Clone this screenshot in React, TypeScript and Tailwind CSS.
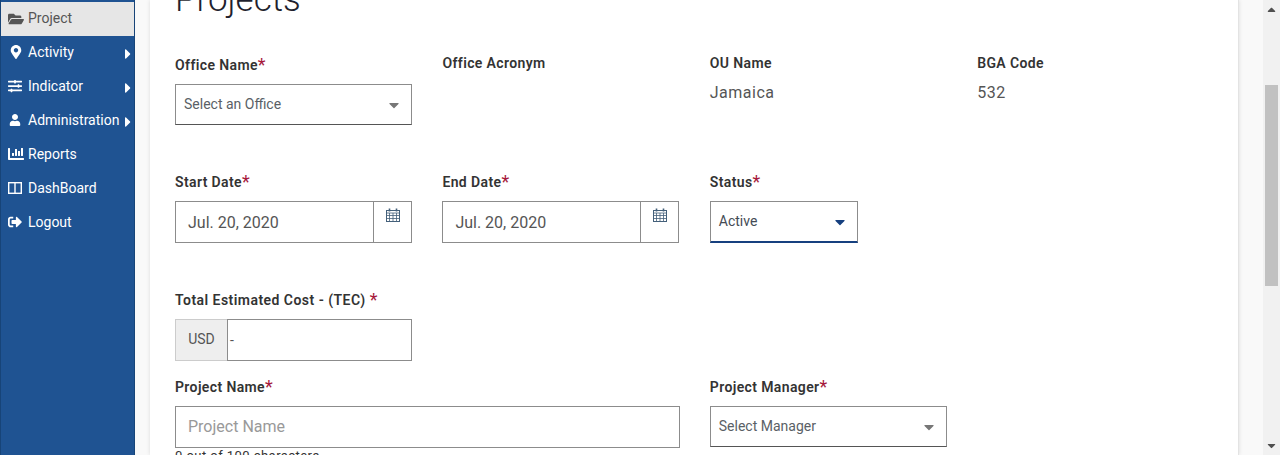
import { ReactNode } from "react";
import {
  FaCaretDown,
  FaCaretRight,
  FaCaretUp,
  FaChartBar,
  FaFolderOpen,
  FaMapMarkerAlt,
  FaSignOutAlt,
  FaSlidersH,
  FaUser,
} from "react-icons/fa";

const SplitIcon = () => (
  <svg width="14" height="12" viewBox="0 0 14 12" fill="none" stroke="currentColor" strokeWidth="1.4">
    <rect x="0.7" y="0.7" width="12.6" height="10.6" />
    <path d="M7 1v10" />
  </svg>
);

const CalendarIcon = () => (
  <svg width="14" height="14" viewBox="0 0 14 14" fill="none" stroke="currentColor" strokeWidth="1">
    <rect x="0.5" y="2.5" width="13" height="11" />
    <path d="M0.5 5h13M0.5 7.5h13M0.5 10.5h13M3.5 5v8M7 5v8M10.5 5v8" strokeWidth="0.8" />
    <path d="M3.5 0.5v3M10.5 0.5v3" strokeWidth="1.6" />
  </svg>
);

const MENU = [
  { name: "Activity", icon: <FaMapMarkerAlt size={14} className="ml-[1px]" />, more: true },
  { name: "Indicator", icon: <FaSlidersH size={14} />, more: true },
  { name: "Administration", icon: <FaUser size={12} className="ml-[1px]" />, more: true },
  { name: "Reports", icon: <FaChartBar size={16} />, more: false },
  { name: "DashBoard", icon: <SplitIcon />, more: false },
  { name: "Logout", icon: <FaSignOutAlt size={14} />, more: false },
];

const Label = ({ children, star = true, spaced = false }: { children: ReactNode; star?: boolean; spaced?: boolean }) => (
  <div className={`flex h-5 items-center text-[14px] font-semibold text-[#333333] ${spaced ? "tracking-[0.46px]" : "tracking-[0.38px]"}`}>
    <span>{children}</span>
    {star && <span className={`mt-[-2px] text-[18px] font-normal text-[#a6193c] ${spaced ? "ml-1" : ""}`}>*</span>}
  </div>
);

const SelectBox = ({ text, width }: { text: string; width: string }) => (
  <div className={`mt-[9px] flex h-[41px] items-center justify-between border border-[#8c8c8c] border-b-[#555555] pl-2 pr-[9px] text-[14px] text-[#5a5f66] ${width}`}>
    <span>{text}</span>
    <FaCaretDown size={16} className="text-[#777777]" />
  </div>
);

const DateBox = ({ value }: { value: string }) => (
  <div className="mt-[9px] flex h-[42px] w-[237px] border border-[#8c8c8c]">
    <div className="flex flex-1 items-center pl-3 pt-[2px] text-[16px] text-[#555555]">{value}</div>
    <div className="flex w-[38px] justify-center border-l border-[#8c8c8c] pt-[6px] text-[#44607a]">
      <CalendarIcon />
    </div>
  </div>
);

export default function App() {
  return (
    <div className="flex h-[455px] w-[1280px] overflow-hidden bg-[#f9f9f9] font-['Roboto',sans-serif]">
      <aside className="h-full w-[135px] shrink-0 border-l border-r border-[#174478] bg-[#1f5392] pt-[2px] text-[14px] text-white">
        <div className="flex h-[34px] items-center bg-[#e6e6e6] pb-[1px] pl-[7px] text-[#555555]">
          <span className="w-[20px]"><FaFolderOpen size={16} /></span>
          <span>Project</span>
        </div>
        {MENU.map((item) => (
          <div key={item.name} className="relative flex h-[34px] items-center pb-[2px] pl-[7px]">
            <span className="flex w-[20px]">{item.icon}</span>
            <span>{item.name}</span>
            {item.more && <FaCaretRight size={16} className="absolute right-[-2px] top-[10px]" />}
          </div>
        ))}
      </aside>

      <main className="ml-[15px] h-full w-[1089px] shrink-0 border-r border-[#e3e3e3] bg-white pl-[25px] shadow-[0_0_4px_rgba(0,0,0,0.12)]">
        <h1 className="mt-[-20px] h-[75px] text-[35px] font-light leading-[40px] text-[#1f1f2e]">Projects</h1>

        <div className="grid h-[117px] grid-cols-[267.4px_267.4px_267.4px_auto]">
          <div>
            <Label>Office Name</Label>
            <SelectBox text="Select an Office" width="w-[237px]" />
          </div>
          <div className="mt-[-2px]"><Label star={false}>Office Acronym</Label></div>
          <div className="mt-[-2px]">
            <Label star={false}>OU Name</Label>
            <div className="mt-[8px] text-[16px] tracking-[0.5px] text-[#555555]">Jamaica</div>
          </div>
          <div className="mt-[-2px]">
            <Label star={false}>BGA Code</Label>
            <div className="mt-[8px] text-[16px] tracking-[0.5px] text-[#555555]">532</div>
          </div>
        </div>

        <div className="grid h-[118px] grid-cols-[267.4px_267.4px_auto]">
          <div>
            <Label>Start Date</Label>
            <DateBox value="Jul. 20, 2020" />
          </div>
          <div>
            <Label>End Date</Label>
            <DateBox value="Jul. 20, 2020" />
          </div>
          <div>
            <Label>Status</Label>
            <div className="mt-[9px] flex h-[42px] w-[148px] items-center justify-between border border-[#8c8c8c] border-b-2 border-b-[#16407f] pl-2 pr-[9px] text-[14px] text-[#444b55]">
              <span>Active</span>
              <FaCaretDown size={16} className="text-[#16407f]" />
            </div>
          </div>
        </div>

        <div className="h-[87px]">
          <Label spaced>Total Estimated Cost - (TEC)</Label>
          <div className="mt-[9px] flex h-[42px] w-[237px]">
            <div className="flex w-[52px] items-center justify-center border border-r-0 border-[#cccccc] bg-[#eeeeee] pb-[2px] text-[14px] text-[#555555]">USD</div>
            <div className="flex flex-1 items-center border border-[#8c8c8c] pl-[2px] text-[14px] text-[#555555]">-</div>
          </div>
        </div>

        <div className="grid grid-cols-[534.8px_auto]">
          <div>
            <Label>Project Name</Label>
            <div className="mt-[9px] flex h-[42px] w-[505px] items-center border border-[#8c8c8c] pl-3 text-[16px] text-[#999999]">Project Name</div>
            <div className="text-[13px] leading-[16px] tracking-[0.45px] text-[#333333]">0 out of 100 characters</div>
          </div>
          <div>
            <Label>Project Manager</Label>
            <SelectBox text="Select Manager" width="w-[237px]" />
          </div>
        </div>
      </main>

      <div className="relative ml-auto flex h-full w-[17px] shrink-0 flex-col items-center justify-between bg-[#f1f1f1] text-[#505050]">
        <FaCaretUp size={13} className="mt-[3px]" />
        <div className="absolute left-[2px] top-[85px] h-[201px] w-[13px] bg-[#c1c1c1]" />
        <FaCaretDown size={13} className="mb-[3px]" />
      </div>
    </div>
  );
}
